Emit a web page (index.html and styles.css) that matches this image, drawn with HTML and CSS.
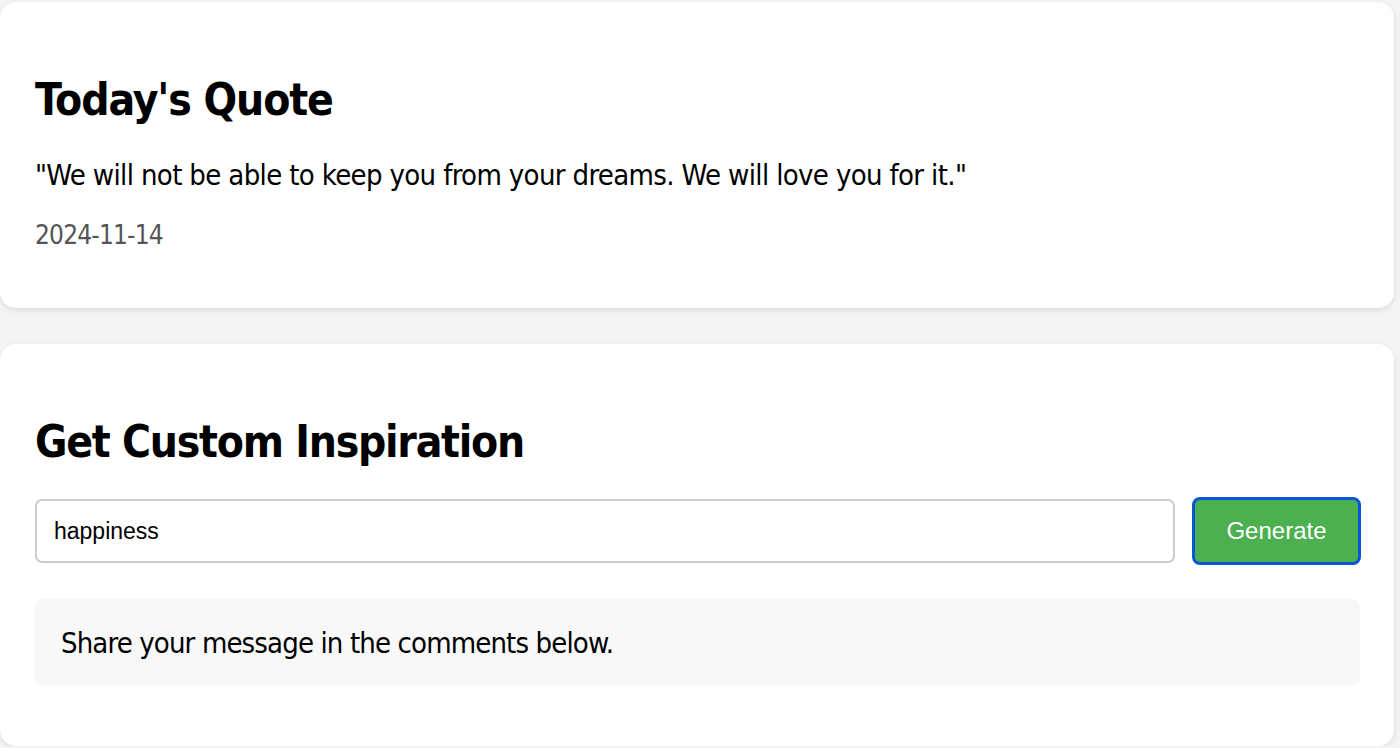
FILE: index.html
```html
<!DOCTYPE html>
<html lang="en">
<head>
<meta charset="utf-8">
<title>Daily Inspiration</title>
<link rel="stylesheet" href="styles.css">
</head>
<body>
<main class="page">
  <section class="card card-quote">
    <h2 class="card-title">Today's Quote</h2>
    <p class="quote">"We will not be able to keep you from your dreams. We will love you for it."</p>
    <p class="date">2024-11-14</p>
  </section>
  <section class="card card-custom">
    <h2 class="card-title card-title-wide">Get Custom Inspiration</h2>
    <div class="form-row">
      <input class="topic-input" type="text" value="happiness">
      <button class="generate-btn" type="button">Generate</button>
    </div>
    <div class="message">Share your message in the comments below.</div>
  </section>
</main>
</body>
</html>
```

FILE: styles.css
```css
html, body {
  margin: 0;
  padding: 0;
  background: #f4f4f4;
}

body {
  font-family: "DejaVu Sans Condensed", "DejaVu Sans", sans-serif;
  color: #000;
  overflow: hidden;
}

.page {
  display: flex;
  flex-direction: column;
  gap: 36px;
  padding: 2px 6px 0 0;
}

.card {
  background: #fff;
  border-radius: 16px;
  box-shadow: 0 2px 6px rgba(0, 0, 0, 0.1);
  padding: 72px 33px 57px 35px;
}

.card-custom {
  padding-bottom: 60px;
}

.card-title {
  margin: 0;
  font-size: 44px;
  line-height: 52px;
  font-weight: bold;
  letter-spacing: -1.1px;
}

.card-title-wide {
  letter-spacing: -1.25px;
}

.quote {
  margin: 31px 0 0;
  font-size: 29px;
  line-height: 36px;
  letter-spacing: -0.65px;
}

.date {
  margin: 26px 0 0;
  font-size: 26px;
  line-height: 32px;
  color: #555;
  letter-spacing: -0.8px;
}

.form-row {
  display: flex;
  align-items: center;
  gap: 17px;
  margin-top: 29px;
}

.topic-input {
  flex: 1;
  min-width: 0;
  box-sizing: border-box;
  height: 64px;
  border: 2px solid #ccc;
  border-radius: 7px;
  padding: 0 17px;
  font-family: "Liberation Sans", Arial, sans-serif;
  font-size: 23px;
  color: #000;
  outline: none;
}

.generate-btn {
  box-sizing: border-box;
  width: 169px;
  height: 68px;
  background: #4caf50;
  border: 3px solid #0a55d4;
  border-radius: 8px;
  color: #fff;
  font-family: "Liberation Sans", Arial, sans-serif;
  font-size: 24px;
  cursor: pointer;
}

.message {
  margin-top: 34px;
  margin-right: 1px;
  background: #f8f8f8;
  border-radius: 8px;
  height: 87px;
  box-sizing: border-box;
  padding: 0 26px;
  display: flex;
  align-items: center;
  font-size: 29px;
  letter-spacing: -0.87px;
}
```
